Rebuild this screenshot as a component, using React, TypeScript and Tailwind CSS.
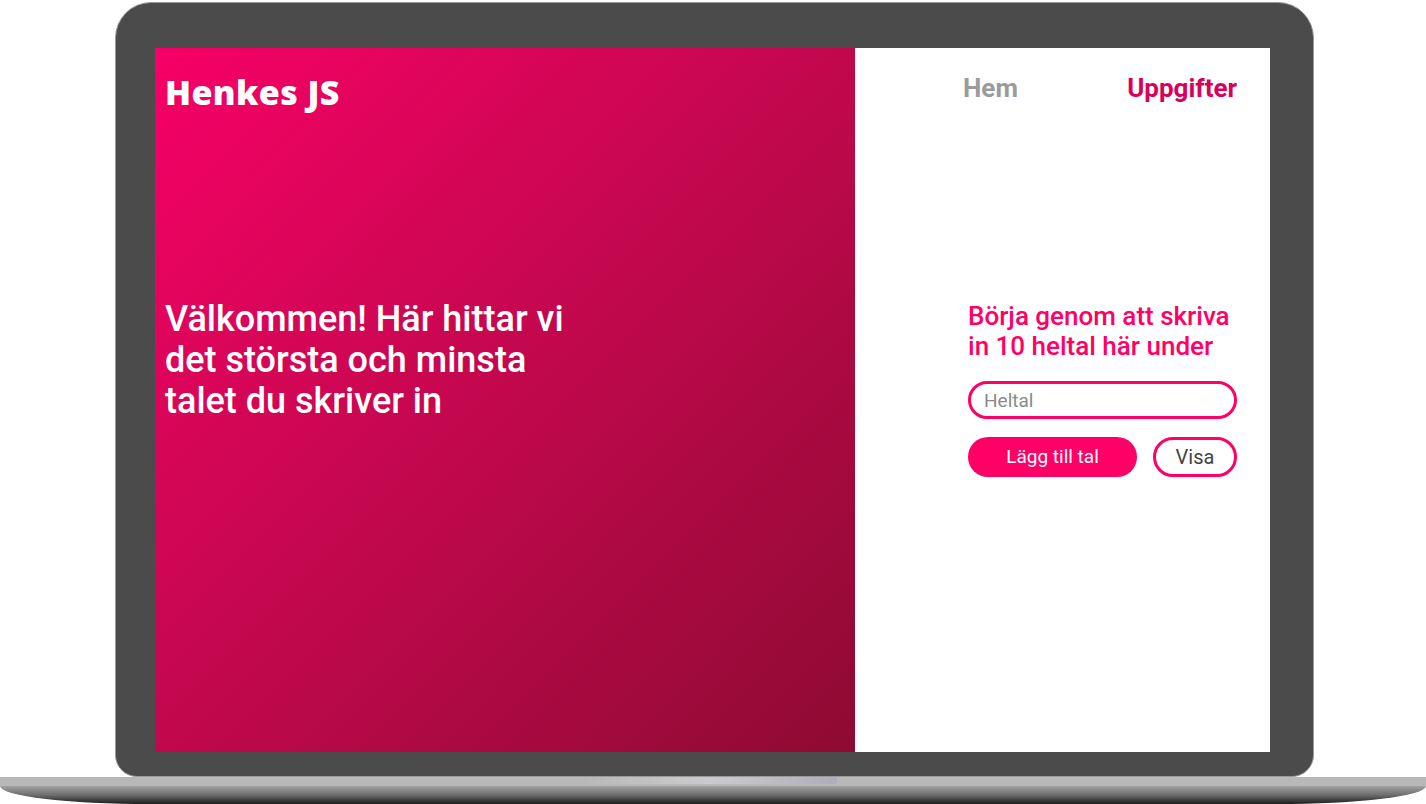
export default function App() {
  return (
    <div className="w-[1426px] h-[804px] bg-white pt-[2px] overflow-hidden font-['Roboto',sans-serif]">
      {/* laptop lid */}
      <div className="ml-[115px] w-[1199px] h-[775px] bg-[#4b4b4b] rounded-t-[36px] rounded-b-[22px] border border-[#9a9a9a] pl-[39px] pr-[43px] pt-[45px]">
        <div className="flex h-[704px]">
          <section className="w-[700px] h-full bg-linear-to-br from-[#f70067] to-[#8e0a33] px-[10px] text-white">
            <h1 className="pt-[21px] text-[34px] leading-[46px] tracking-[0.4px] font-extrabold font-['Open_Sans',sans-serif]">
              Henkes JS
            </h1>
            <p className="mt-[184px] text-[36px] leading-[41px] font-medium">
              Välkommen! Här hittar vi
              <br />
              det största och minsta
              <br />
              talet du skriver in
            </p>
          </section>
          <section className="flex-1 h-full bg-white pl-[108px] pr-[33px]">
            <nav className="pt-[25px] flex justify-between text-[26px] leading-[30px] font-bold">
              <a className="text-[#9b9b9b]">Hem</a>
              <a className="text-[#d9005b]">Uppgifter</a>
            </nav>
            <div className="ml-[5px] mt-[198px]">
              <h2 className="text-[26px] leading-[30px] font-medium text-[#ff0066]">
                Börja genom att skriva
                <br />
                in 10 heltal här under
              </h2>
              <input
                placeholder="Heltal"
                className="mt-[20px] w-[269px] h-[38px] rounded-full border-[3px] border-[#ff0066] px-[13px] text-[19px] text-[#333] placeholder:text-[#8a8a8a] outline-none"
              />
              <div className="mt-[18px] flex gap-[16px]">
                <button className="w-[169px] h-[40px] rounded-full bg-[#ff0066] text-white text-[19px]">
                  Lägg till tal
                </button>
                <button className="w-[84px] h-[40px] rounded-full border-[3px] border-[#ff0066] text-[#444] text-[20px]">
                  Visa
                </button>
              </div>
            </div>
          </section>
        </div>
      </div>
      {/* laptop base */}
      <div className="w-[1426px]">
        <div className="h-[9px] bg-[#b8b8b8] flex justify-center">
          <div className="ml-[-8px] w-[256px] h-[7px] bg-linear-to-r from-[#b8b8b8] via-[#cbcbcf] to-[#aeaeb8] rounded-b-[4px]" />
        </div>
        <div className="h-[18px] bg-linear-to-b from-[#a2a2a2] via-[#6e6e6e] to-[#1e1e1e] rounded-bl-[150px_18px] rounded-br-[150px_18px]" />
      </div>
    </div>
  );
}
